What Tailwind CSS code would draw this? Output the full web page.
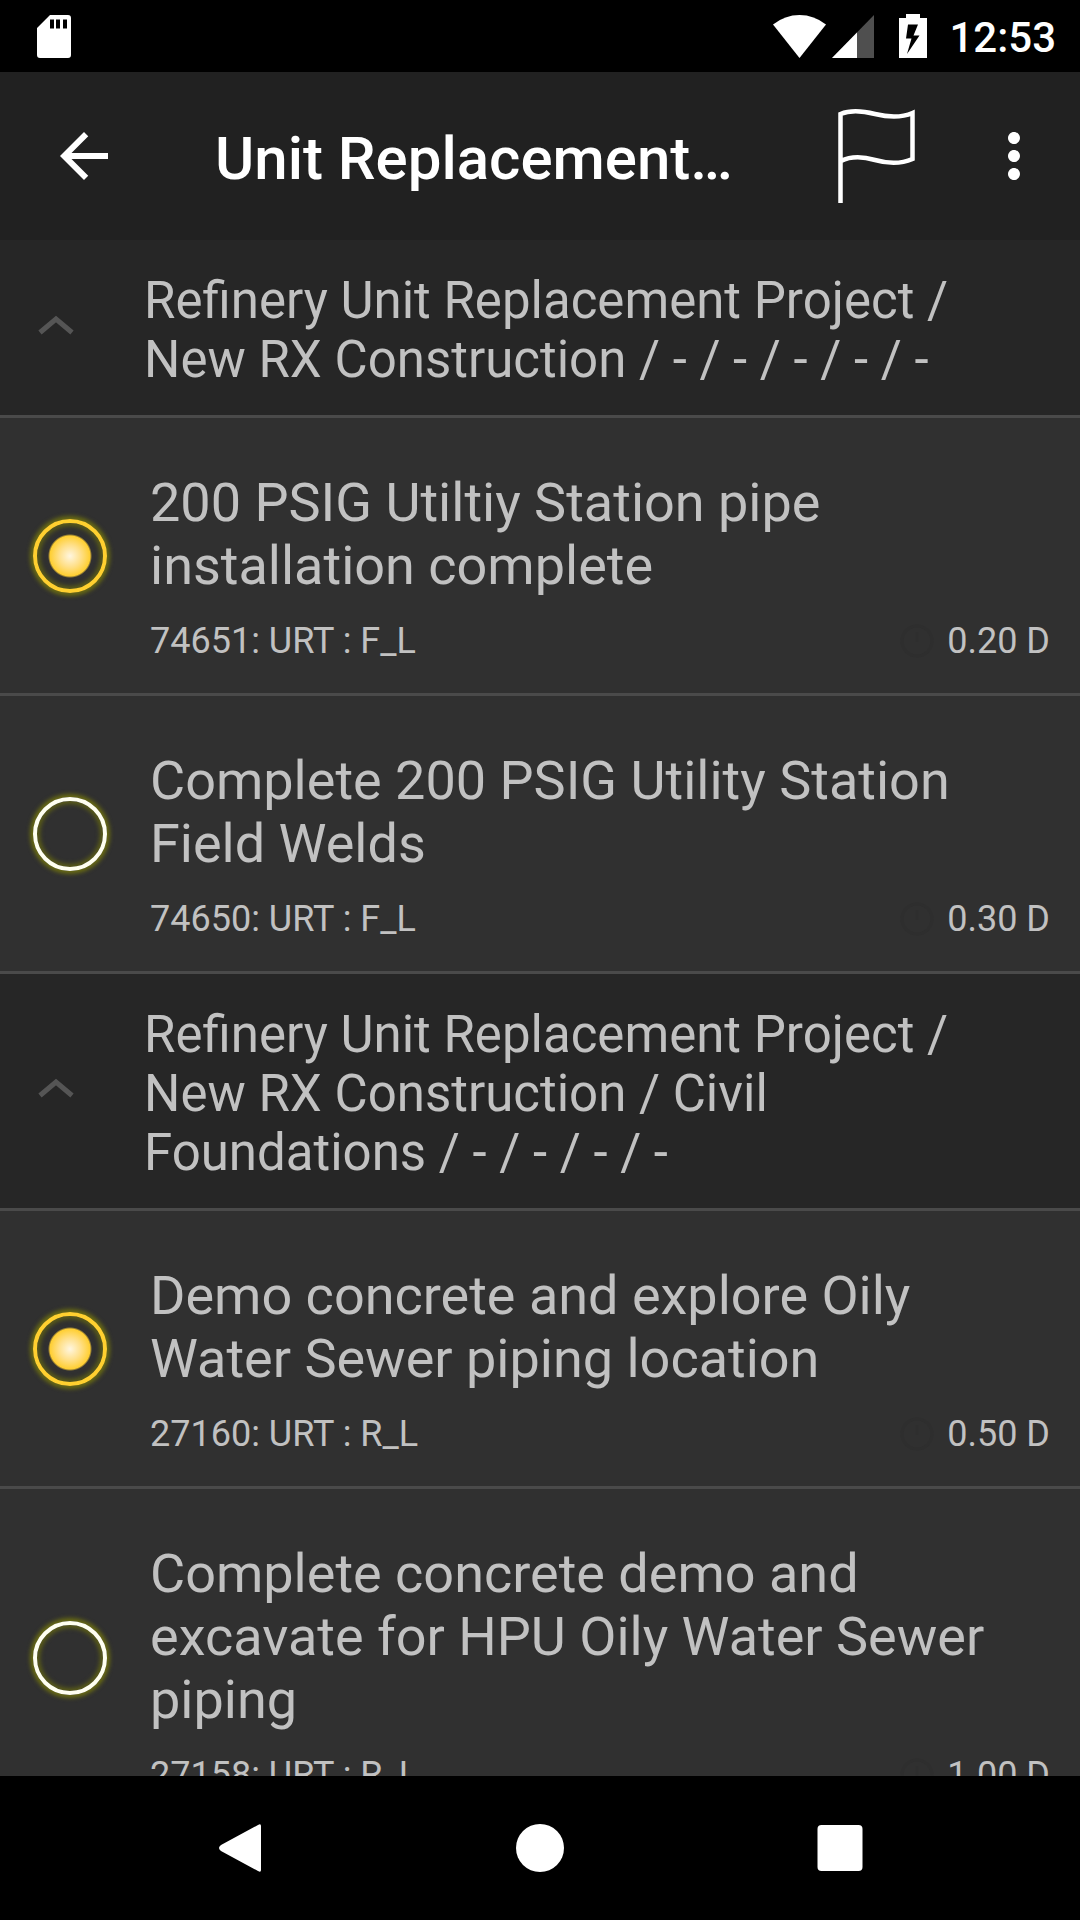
<!DOCTYPE html>
<html lang="en">
<head>
  <meta charset="UTF-8">
  <meta name="viewport" content="width=device-width, initial-scale=1.0">
  <title>Unit Replacement</title>
  <script src="https://cdn.jsdelivr.net/npm/@tailwindcss/browser@4"></script>
</head>
<body class="bg-black font-[Roboto,sans-serif]">
  <div class="flex h-screen flex-col overflow-hidden">

    <!-- Status bar -->
    <div class="flex h-[72px] shrink-0 items-center justify-between bg-black pr-6 pl-[37px] text-white">
      <svg class="h-[43px] w-[34px]" viewBox="0 0 34 43" fill="currentColor">
        <path fill-rule="evenodd" d="M13 0H31Q34 0 34 3V40Q34 43 31 43H3Q0 43 0 40V13ZM13 4.500V13.500H17V4.500ZM19 4.500V13.500H23V4.500ZM26 4.500V13.500H30V4.500Z"/>
      </svg>
      <div class="flex items-center">
        <svg class="h-[43px] w-[53px]" viewBox="0 0 53 43" fill="currentColor">
          <path d="M0 9.500Q12 0 26.500 0T53 9.500L26.500 43Z"/>
        </svg>
        <svg class="ml-[6px] h-[43px] w-[42px]" viewBox="0 0 42 43">
          <path d="M42 0V43H0Z" fill="#4f4f4f"/>
          <path d="M25 17.400V43H0Z" fill="#fff"/>
        </svg>
        <svg class="ml-[25px] h-[44px] w-[28px]" viewBox="0 0 28 44" fill="currentColor">
          <path fill-rule="evenodd" d="M7 0H21V4H28V44H0V4H7ZM9 10.500L7 24.500H12.500L8 40L20.500 21.500H14.500L19 10.500Z"/>
        </svg>
        <span class="ml-[22px] pt-[3px] text-[42px] leading-[50px] font-medium">12:53</span>
      </div>
    </div>

    <!-- App bar -->
    <header class="flex h-[168px] shrink-0 items-center bg-[#212121] pr-[30px] pl-12 text-white">
      <button type="button" aria-label="Back" class="shrink-0">
        <svg class="size-[72px]" viewBox="0 0 24 24" fill="currentColor"><path d="M20 11H7.830l5.590-5.590L12 4l-8 8 8 8 1.410-1.410L7.830 13H20v-2z"/></svg>
      </button>
      <h1 class="min-w-0 flex-1 truncate pt-[6px] pl-[95px] text-[60px] leading-[70px] font-medium">Unit Replacement…</h1>
      <button type="button" aria-label="Flag" class="mr-[63px] shrink-0">
        <svg class="h-[96px] w-[78px]" viewBox="0 0 78 96" fill="none" stroke="currentColor" stroke-width="4.500">
          <path d="M3.500 95V6C12 2.500 24 2.500 38 6S64 10 75.500 5V51C64 56 52 56 38 52S12 49 4 53"/>
        </svg>
      </button>
      <button type="button" aria-label="More options" class="shrink-0">
        <svg class="size-[72px]" viewBox="0 0 24 24" fill="currentColor"><path d="M12 8c1.100 0 2-.9 2-2s-.9-2-2-2-2 .9-2 2 .9 2 2 2zm0 2c-1.100 0-2 .9-2 2s.9 2 2 2 2-.9 2-2-.9-2-2-2zm0 6c-1.100 0-2 .9-2 2s.9 2 2 2 2-.9 2-2-.9-2-2-2z"/></svg>
      </button>
    </header>

    <!-- Task list -->
    <main id="taskList" class="min-h-0 flex-1 overflow-hidden bg-[#303030] text-[#c1c1c1]"></main>

    <!-- Navigation bar -->
    <nav class="grid h-[144px] shrink-0 grid-cols-3 bg-black px-[90px] text-white">
      <button type="button" aria-label="Back" class="flex items-center justify-center">
        <svg class="size-[48px]" viewBox="0 0 48 48" fill="currentColor"><path d="M45 2V46Q45 49 42 47L5 27Q1 24 5 21L42 1Q45 -1 45 2Z"/></svg>
      </button>
      <button type="button" aria-label="Home" class="flex items-center justify-center">
        <svg class="size-[48px]" viewBox="0 0 48 48" fill="currentColor"><circle cx="24" cy="24" r="24"/></svg>
      </button>
      <button type="button" aria-label="Recent apps" class="flex items-center justify-center">
        <svg class="size-[48px]" viewBox="0 0 48 48" fill="currentColor"><rect x="1.500" y="1" width="45" height="46" rx="4"/></svg>
      </button>
    </nav>
  </div>

  <script>
    const groups = [
      {
        name: "Refinery Unit Replacement Project / New RX Construction / - / - / - / - / -",
        tasks: [
          { id: "74651", title: "200 PSIG Utiltiy Station pipe installation complete", code: "URT : F_L", left: "0.20 D", on: true },
          { id: "74650", title: "Complete 200 PSIG Utility Station Field Welds", code: "URT : F_L", left: "0.30 D", on: false }
        ]
      },
      {
        name: "Refinery Unit Replacement Project / New RX Construction / Civil Foundations / - / - / - / -",
        tasks: [
          { id: "27160", title: "Demo concrete and explore Oily Water Sewer piping location", code: "URT : R_L", left: "0.50 D", on: true },
          { id: "27158", title: "Complete concrete demo and excavate for HPU Oily Water Sewer piping", code: "URT : R_L", left: "1.00 D", on: false }
        ]
      }
    ];

    const groupRow = (g) => `
      <button type="button" aria-expanded="true" class="flex w-full items-center border-b-3 border-[#4a4a4a] bg-[#262626] pl-5 text-left">
        <svg class="size-[72px] shrink-0" viewBox="0 0 72 72" fill="none" stroke="#555" stroke-width="5"><path d="M20 40.500L36 27L52 40.500"/></svg>
        <span class="flex-1 pt-[31px] pr-[90px] pb-[26px] pl-[52px] text-[51px] leading-[59px]">${g.name}</span>
      </button>`;

    const taskRow = (t) => `
      <div class="flex items-center border-b-3 border-[#4a4a4a] pl-[33px]">
        <input type="checkbox" id="t${t.id}" ${t.on ? "checked" : ""} class="size-[74px] shrink-0 appearance-none rounded-full border-4 border-[#fffff0] shadow-[0_0_4px_3px_#6b6d12,inset_0_0_4px_3px_#5a5c18] checked:border-[#ffd02f] checked:bg-[radial-gradient(circle_at_center,#fff6e0_0,#ffe08a_11px,#ffcf33_20px,transparent_22px)]">
        <div class="flex-1 pt-[53px] pr-[30px] pb-[31px] pl-[43px]">
          <label for="t${t.id}" class="block pr-12 text-[54px] leading-[63px]">${t.title}</label>
          <div class="mt-[23px] flex items-center justify-between text-[36px] leading-[42px]">
            <span>${t.id}: ${t.code}</span>
            <span class="flex items-center gap-3">
              <svg class="size-[36px]" viewBox="0 0 36 36" fill="none" stroke="#2e2e2e" stroke-width="3"><circle cx="18" cy="18" r="15"/><path d="M18 9V19"/></svg>
              ${t.left}
            </span>
          </div>
        </div>
      </div>`;

    document.getElementById("taskList").innerHTML = groups
      .map((g) => groupRow(g) + g.tasks.map(taskRow).join(""))
      .join("");
  </script>
</body>
</html>
